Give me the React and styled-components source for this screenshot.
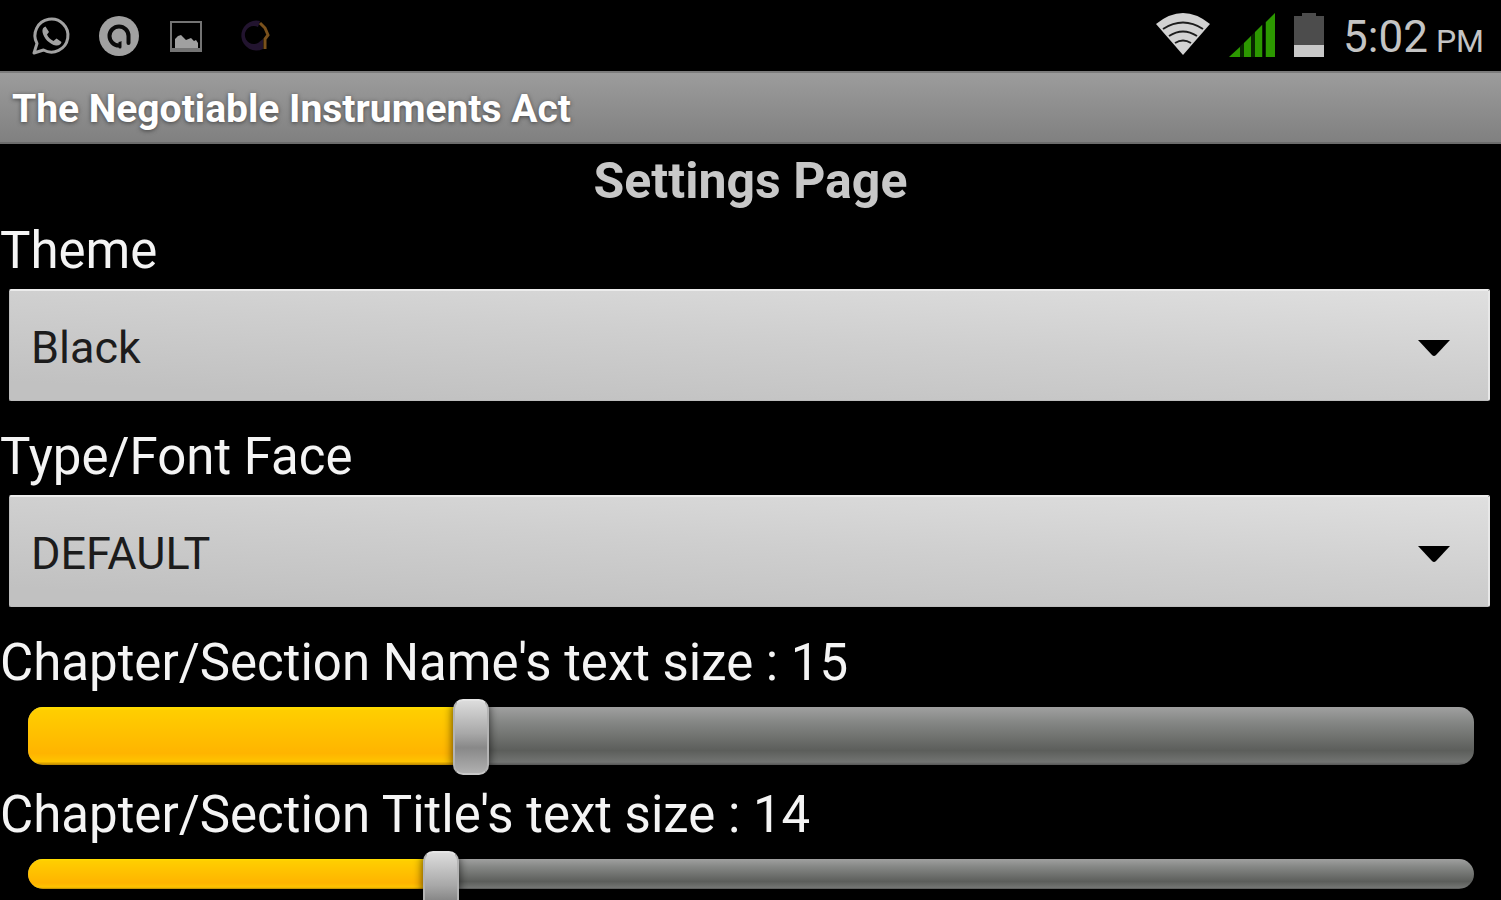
import React, { useState } from "react";
import styled, { createGlobalStyle } from "styled-components";

const GlobalStyle = createGlobalStyle`
  * {
    box-sizing: border-box;
  }
  body {
    margin: 0;
    background: #000;
    font-family: Roboto, "Noto Sans", sans-serif;
  }
`;

const Screen = styled.div`
  display: flex;
  flex-direction: column;
  height: 100vh;
  overflow: hidden;
  background: #000;
  color: #f4f4f4;
`;

const StatusBar = styled.header`
  display: flex;
  flex: none;
  justify-content: space-between;
  height: 71px;
  padding: 0 17px 0 30px;
`;

const Notifications = styled.div`
  display: flex;
  align-items: center;
  gap: 26px;
`;

const Indicators = styled.div`
  display: flex;
  align-items: center;
  gap: 18px;
`;

const Icon = styled.svg`
  display: block;
  flex: none;
`;

const Clock = styled.time`
  font-size: 44px;
  line-height: 71px;
  padding-top: 8px;
  color: #c4c4c4;
`;

const Period = styled.span`
  font-size: 32px;
  margin-left: 8px;
`;

const TitleBar = styled.div`
  flex: none;
  height: 73px;
  padding: 0 12px;
  border-top: 2px solid #7c7c7c;
  border-bottom: 2px solid #6c6c6c;
  background: linear-gradient(#9c9c9c, #808080);
  font-size: 39px;
  font-weight: 700;
  line-height: 73px;
  color: #fff;
  text-shadow: 0 1px 4px #444;
`;

const Settings = styled.main`
  flex: none;
`;

const Heading = styled.h1`
  margin: 0 0 1px;
  font-size: 50px;
  font-weight: 700;
  line-height: 74px;
  text-align: center;
  color: #c8c8c8;
`;

const Label = styled.label`
  display: block;
  font-size: 51px;
  line-height: 64px;
  white-space: nowrap;
`;

const SpinnerBox = styled.div`
  display: grid;
  align-items: center;
  margin: 6px 11px 24px 9px;

  > * {
    grid-area: 1 / 1;
  }
`;

const Select = styled.select`
  appearance: none;
  width: 100%;
  height: 112px;
  padding: 3px 80px 0 21px;
  border: 1px solid #bcbcbc;
  border-top: 2px solid #ececec;
  border-right: 2px solid #e8e8e8;
  border-radius: 2px;
  background: linear-gradient(3deg, #c1c1c1 10%, #cfcfcf 55%, #dfdfdf);
  font-family: inherit;
  font-size: 45px;
  color: #1c1c1c;
`;

const Arrow = styled(Icon)`
  justify-self: end;
  margin: 6px 39px 0 0;
  pointer-events: none;
`;

const SeekBox = styled.div`
  display: grid;
  align-items: start;
  margin: 4px 9px 8px 10px;

  > * {
    grid-area: 1 / 1;
  }
`;

const Track = styled.div`
  height: ${(props) => (props.$slim ? "30px" : "58px")};
  margin: 8px 18px 0;
  overflow: hidden;
  border-radius: 15px;
  background: linear-gradient(#a0a0a0, #868886 25%, #5c5e5b 75%, #727472 95%, #555);
`;

const Fill = styled.div`
  height: 100%;
  background: linear-gradient(#ffe000, #ffce00 6%, #ffb400 80%, #ffc400 94%, #b88400);
`;

const Range = styled.input`
  appearance: none;
  width: 100%;
  height: 76px;
  margin: 0;
  background: transparent;

  &::-webkit-slider-thumb {
    appearance: none;
    width: 36px;
    height: 76px;
    border: 2px solid #b4b4b4;
    border-top-color: #e4e4e4;
    border-bottom-color: #c8c8c8;
    border-radius: 10px;
    background: linear-gradient(#dcdcdc, #a8a8a8 45%, #888 65%, #b0b0b0);
    box-shadow: 0 0 10px rgba(0, 0, 0, 0.7);
  }
`;

const Spinner = ({ id, label, options }) => {
  const [value, setValue] = useState(options[0]);

  return (
    <>
      <Label htmlFor={id}>{label}</Label>
      <SpinnerBox>
        <Select id={id} value={value} onChange={(e) => setValue(e.target.value)}>
          {options.map((option) => (
            <option key={option}>{option}</option>
          ))}
        </Select>
        <Arrow width="34" height="18" viewBox="0 0 34 18" aria-hidden="true">
          <path d="M1 1h32L19 16q-2 2-4 0z" fill="#000" />
        </Arrow>
      </SpinnerBox>
    </>
  );
};

const MAX_SIZE = 49;

const SeekBar = ({ id, label, initial, slim }) => {
  const [size, setSize] = useState(initial);

  return (
    <>
      <Label htmlFor={id}>{`${label} : ${size}`}</Label>
      <SeekBox>
        <Track $slim={slim}>
          <Fill style={{ width: `${(size / MAX_SIZE) * 100}%` }} />
        </Track>
        <Range
          id={id}
          type="range"
          min="0"
          max={MAX_SIZE}
          value={size}
          onChange={(e) => setSize(Number(e.target.value))}
        />
      </SeekBox>
    </>
  );
};

const WhatsAppIcon = () => (
  <Icon width="42" height="42" viewBox="0 0 42 42" aria-hidden="true">
    <path
      d="M4 38l3-9.500A16.500 16.500 0 1 1 13.500 35z"
      fill="none"
      stroke="#a2a2a2"
      strokeWidth="3"
      strokeLinejoin="round"
    />
    <path
      d="M15.500 11.500c-2 .6-3.500 2.500-3 5.500 1 6 7 12.500 13.500 13.500 3 .4 5-1 5.500-3.500l-5-3.500-3 2.500c-3-1.300-5.500-3.700-6.500-6.500l2-2.500z"
      fill="#a2a2a2"
    />
  </Icon>
);

const SwirlIcon = () => (
  <Icon width="42" height="42" viewBox="0 0 42 42" aria-hidden="true">
    <circle cx="21" cy="21" r="20" fill="#a0a0a0" />
    <path
      d="M21 30.500A9.500 9.500 0 1 1 30.500 21v7"
      fill="none"
      stroke="#0a0a0a"
      strokeWidth="4"
      strokeLinecap="round"
    />
    <path d="M22 26v6" stroke="#0a0a0a" strokeWidth="3" strokeLinecap="round" />
    <circle cx="20.500" cy="21" r="6" fill="#a0a0a0" />
    <path d="M26 20v12" stroke="#a0a0a0" strokeWidth="4" />
  </Icon>
);

const PictureIcon = () => (
  <Icon width="42" height="42" viewBox="0 0 42 42" aria-hidden="true">
    <rect x="5" y="7" width="30" height="29" fill="none" stroke="#747474" strokeWidth="2" />
    <path d="M4 35h32" stroke="#747474" strokeWidth="4" />
    <path d="M9 33v-9l3-3 3-1 5 5 5-2 3 3 2-1 2 3v5z" fill="#a0a0a0" />
  </Icon>
);

const RingIcon = () => (
  <Icon width="42" height="42" viewBox="0 0 42 42" aria-hidden="true">
    <path
      d="M26 6A15 15 0 1 0 29 34V24l-5 4A9 9 0 1 1 24 12z"
      fill="#22142f"
    />
    <path d="M26 8l5 5 3 7-3 4v10" fill="none" stroke="#7a511c" strokeWidth="3" />
  </Icon>
);

const WifiIcon = () => (
  <Icon width="56" height="48" viewBox="0 0 56 48" aria-hidden="true">
    <path d="M1 12Q28-10 55 12L28 43z" fill="#d2d2d2" />
    <g fill="none" stroke="#1c1c1c" strokeWidth="2">
      <path d="M8 17q20-13 40 0" />
      <path d="M14 24q14-9 28 0" />
      <path d="M20 31q8-5 16 0" />
    </g>
  </Icon>
);

const SignalIcon = () => (
  <Icon width="46" height="46" viewBox="0 0 46 46" aria-hidden="true">
    <path d="M0 44L46 0v44z" fill="#082600" />
    <path d="M0 44l11-10v10zM15 30l7-7v21h-7zM26 19l7-7v32h-7zM37 9l9-9v44h-9z" fill="#2c9800" />
    <path d="M34 10v34h2V8z" fill="#000" />
  </Icon>
);

const BatteryIcon = () => (
  <Icon width="32" height="46" viewBox="0 0 32 46" aria-hidden="true">
    <path d="M1 3h8V0h14v3h8v29H1z" fill="#4c4c4c" />
    <path d="M1 32h30v12H1z" fill="#c8c8c8" />
  </Icon>
);

const App = () => {
  return (
    <Screen>
      <GlobalStyle />
      <StatusBar>
        <Notifications>
          <WhatsAppIcon />
          <SwirlIcon />
          <PictureIcon />
          <RingIcon />
        </Notifications>
        <Indicators>
          <WifiIcon />
          <SignalIcon />
          <BatteryIcon />
          <Clock>
            5:02<Period>PM</Period>
          </Clock>
        </Indicators>
      </StatusBar>

      <TitleBar>The Negotiable Instruments Act</TitleBar>

      <Settings>
        <Heading>Settings Page</Heading>
        <Spinner id="theme" label="Theme" options={["Black", "White"]} />
        <Spinner
          id="typeface"
          label="Type/Font Face"
          options={["DEFAULT", "MONOSPACE", "SANS SERIF", "SERIF"]}
        />
        <SeekBar id="nameSize" label="Chapter/Section Name's text size" initial={15} />
        <SeekBar id="titleSize" label="Chapter/Section Title's text size" initial={14} slim />
      </Settings>
    </Screen>
  );
};

export default App;
